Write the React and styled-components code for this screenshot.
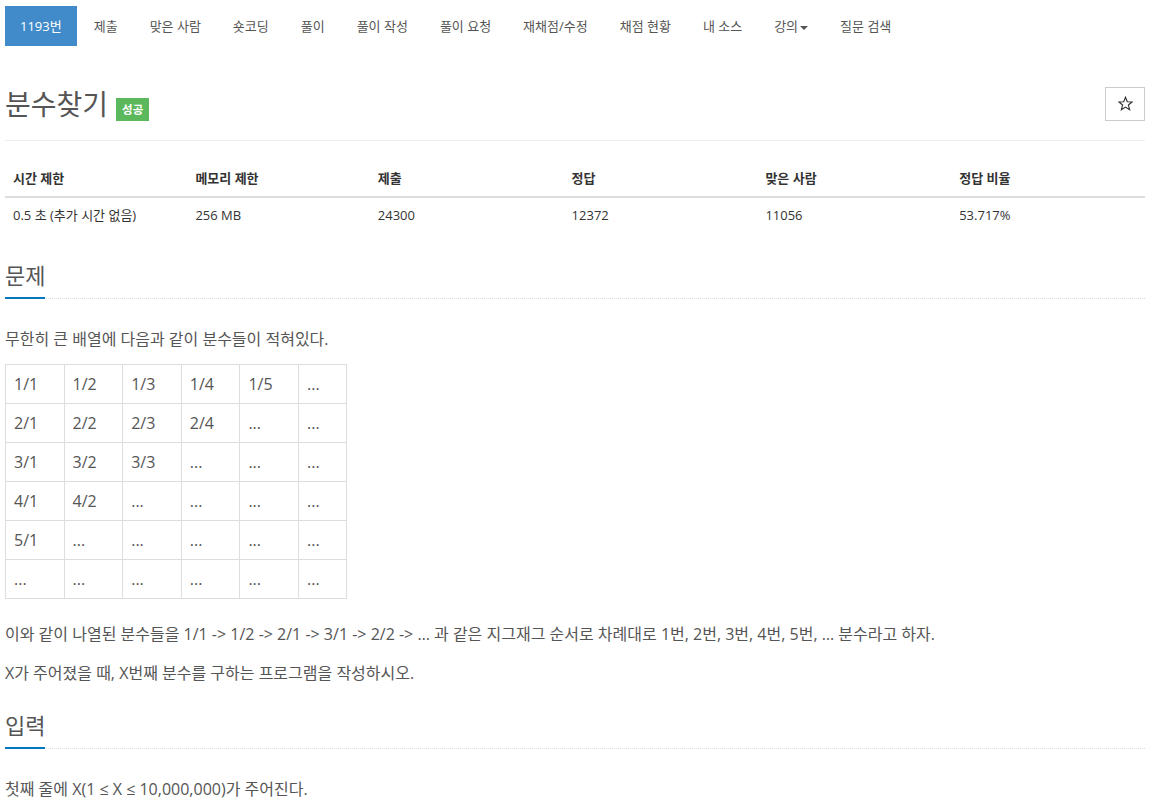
import React from 'react'
import styled, { createGlobalStyle } from 'styled-components'

const GlobalStyle = createGlobalStyle`
  * { box-sizing: border-box; }
  body {
    margin: 0;
    background: #fff;
    font-family: "Open Sans", "Noto Sans CJK KR", sans-serif;
    font-size: 13px;
    color: #333;
  }
`

const Page = styled.div`
  width: 1140px;
  margin: 0 5px;
  padding-top: 6px;
`

const Nav = styled.ul`
  display: flex;
  list-style: none;
  margin: 0;
  padding: 0;
`

const NavItem = styled.li`
  & + & { margin-left: 2px; }
`

const NavLink = styled.a`
  display: block;
  padding: 10px 15px;
  line-height: 20px;
  font-size: 13px;
  color: ${p => (p.$active ? '#fff' : '#555')};
  background: ${p => (p.$active ? '#428bca' : 'transparent')};
  text-decoration: none;
  cursor: pointer;
`

const Caret = styled.span`
  display: inline-block;
  width: 0;
  height: 0;
  margin-left: 2px;
  vertical-align: middle;
  border-top: 4px solid #555;
  border-left: 4px solid transparent;
  border-right: 4px solid transparent;
`

const PageHeader = styled.div`
  display: flex;
  align-items: center;
  justify-content: space-between;
  margin: 40px 0 19px;
  padding-bottom: 19px;
  border-bottom: 1px solid #eee;
`

const TitleRow = styled.div`
  display: flex;
  align-items: center;
  gap: 8px;
`

const Title = styled.h1`
  margin: 0;
  font-size: 28px;
  line-height: 34px;
  font-weight: 400;
  color: #555;
`

const Badge = styled.span`
  display: inline-block;
  margin-top: 12px;
  padding: 4px 6px;
  font-size: 11.5px;
  line-height: 15px;
  font-weight: 700;
  color: #fff;
  background: #5cb85c;
`

const StarButton = styled.button`
  width: 40px;
  height: 34px;
  display: flex;
  align-items: center;
  justify-content: center;
  padding: 0;
  background: #fff;
  border: 1px solid #ccc;
  cursor: pointer;
`

const InfoTable = styled.table`
  width: 100%;
  border-collapse: collapse;
  margin-bottom: 29px;

  th, td {
    padding: 8px;
    line-height: 20px;
    text-align: left;
    font-size: 13px;
    color: #333;
  }
  th {
    font-weight: 700;
    border-bottom: 2px solid #ddd;
  }
  td { padding-top: 7px; }
  th:nth-child(-n+2) { width: 16%; }
  th:nth-child(n+3) { width: 17%; }
`

const Headline = styled.div`
  margin: 27px 0 28px;
  border-bottom: 1px dotted #d4dbe3;
`

const HeadlineTitle = styled.h2`
  display: inline-block;
  margin: 0 0 -1px;
  padding-bottom: 9px;
  font-size: 22px;
  line-height: 26px;
  font-weight: 400;
  color: #555;
  border-bottom: 2px solid #0076c0;
`

const Text = styled.p`
  margin: 0 0 15px;
  font-size: 16px;
  line-height: 24px;
  color: #555;
`

const FractionTable = styled.table`
  border-collapse: collapse;
  margin: -2px 0 23px;

  td {
    width: 58.6px;
    padding: 8px;
    font-size: 16px;
    line-height: 22px;
    color: #555;
    border: 1px solid #ddd;
  }
  td:last-child { width: 48px; }
`

const navItems = ['제출', '맞은 사람', '숏코딩', '풀이', '풀이 작성', '풀이 요청', '재채점/수정', '채점 현황', '내 소스']

const info = [
  ['시간 제한', '0.5 초 (추가 시간 없음)'],
  ['메모리 제한', '256 MB'],
  ['제출', '24300'],
  ['정답', '12372'],
  ['맞은 사람', '11056'],
  ['정답 비율', '53.717%'],
]

const grid = [
  ['1/1', '1/2', '1/3', '1/4', '1/5', '...'],
  ['2/1', '2/2', '2/3', '2/4', '...', '...'],
  ['3/1', '3/2', '3/3', '...', '...', '...'],
  ['4/1', '4/2', '...', '...', '...', '...'],
  ['5/1', '...', '...', '...', '...', '...'],
  ['...', '...', '...', '...', '...', '...'],
]

const StarIcon = () => (
  <svg width="15" height="15" viewBox="0 0 24 24">
    <polygon
      points="12,2 14.9,9.2 22.5,9.6 16.6,14.5 18.6,21.9 12,17.7 5.4,21.9 7.4,14.5 1.5,9.6 9.1,9.2"
      fill="none"
      stroke="#333"
      strokeWidth="1.8"
      strokeLinejoin="miter"
    />
  </svg>
)

const App = () => {
  return (
    <Page>
      <GlobalStyle />
      <Nav>
        <NavItem><NavLink $active>1193번</NavLink></NavItem>
        {navItems.map(item => (
          <NavItem key={item}><NavLink>{item}</NavLink></NavItem>
        ))}
        <NavItem><NavLink>강의<Caret /></NavLink></NavItem>
        <NavItem><NavLink>질문 검색</NavLink></NavItem>
      </Nav>

      <PageHeader>
        <TitleRow>
          <Title>분수찾기</Title>
          <Badge>성공</Badge>
        </TitleRow>
        <StarButton><StarIcon /></StarButton>
      </PageHeader>

      <InfoTable>
        <thead>
          <tr>{info.map(([h]) => <th key={h}>{h}</th>)}</tr>
        </thead>
        <tbody>
          <tr>{info.map(([h, v]) => <td key={h}>{v}</td>)}</tr>
        </tbody>
      </InfoTable>

      <Headline><HeadlineTitle>문제</HeadlineTitle></Headline>
      <Text>무한히 큰 배열에 다음과 같이 분수들이 적혀있다.</Text>
      <FractionTable>
        <tbody>
          {grid.map((row, i) => (
            <tr key={i}>{row.map((c, j) => <td key={j}>{c}</td>)}</tr>
          ))}
        </tbody>
      </FractionTable>
      <Text>이와 같이 나열된 분수들을 1/1 -&gt; 1/2 -&gt; 2/1 -&gt; 3/1 -&gt; 2/2 -&gt; … 과 같은 지그재그 순서로 차례대로 1번, 2번, 3번, 4번, 5번, … 분수라고 하자.</Text>
      <Text>X가 주어졌을 때, X번째 분수를 구하는 프로그램을 작성하시오.</Text>

      <Headline><HeadlineTitle>입력</HeadlineTitle></Headline>
      <Text>첫째 줄에 X(1 ≤ X ≤ 10,000,000)가 주어진다.</Text>
    </Page>
  )
}

export default App
